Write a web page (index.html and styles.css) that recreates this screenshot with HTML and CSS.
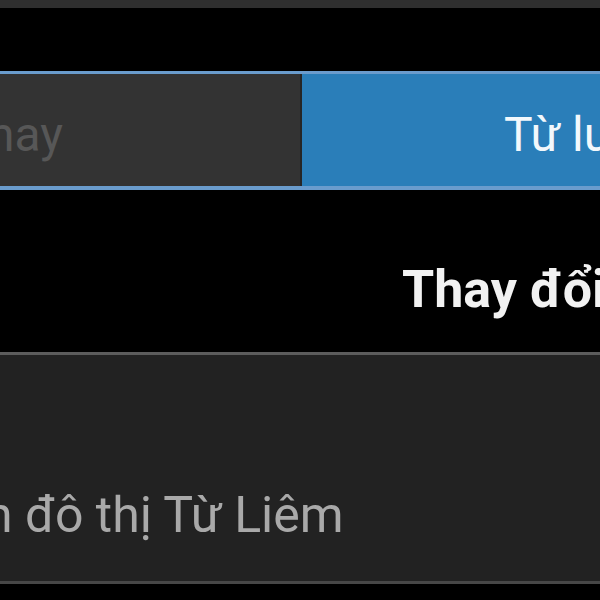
FILE: index.html
```html
<!DOCTYPE html>
<html lang="vi">
<head>
<meta charset="utf-8">
<title>Thay đổi</title>
<link rel="stylesheet" href="styles.css">
</head>
<body>
<div class="screen">
  <div class="topbar"></div>
  <div class="tabs">
    <div class="tab tab-off"><span class="tab-label-off">hay</span></div>
    <div class="tab tab-on"><span class="tab-label-on">Từ lư</span></div>
  </div>
  <h1 class="heading">Thay đổi</h1>
  <div class="panel">
    <p class="panel-text">n đô thị Từ Liêm</p>
  </div>
</div>
</body>
</html>
```

FILE: styles.css
```css
html, body {
  margin: 0;
  padding: 0;
  background: #000;
}
.screen {
  width: 600px;
  height: 600px;
  overflow: hidden;
  background: #000;
  font-family: Roboto, "Noto Sans", sans-serif;
}
.topbar {
  height: 8px;
  background: #2f2f2f;
}
.tabs {
  margin-top: 63px;
  display: flex;
  border-top: 3px solid #6a9ccd;
  border-bottom: 4px solid #6a9ccd;
  height: 112px;
}
.tab {
  height: 112px;
  font-size: 48px;
  line-height: 48px;
  white-space: nowrap;
  overflow: hidden;
  box-sizing: border-box;
  padding-top: 37px;
}
.tab-off {
  width: 302px;
  flex: none;
  background: #333333;
  border-right: 2px solid #262626;
}
.tab-label-off {
  display: inline-block;
  margin-left: -12px;
  color: #575757;
}
.tab-on {
  flex: 1;
  background: #2a7eb9;
  padding-left: 202px;
}
.tab-label-on {
  color: #f2f8fc;
}
.heading {
  margin: 74px 0 36px;
  padding-left: 402px;
  font-size: 52px;
  line-height: 52px;
  font-weight: 700;
  color: #f2f2f2;
  white-space: nowrap;
}
.panel {
  border-top: 3px solid #5c5c5c;
  border-bottom: 3px solid #474747;
  background: #222222;
  height: 226px;
  overflow: hidden;
}
.panel-text {
  margin: 135px 0 0 -15px;
  font-size: 50px;
  line-height: 50px;
  color: #a9a9a9;
  white-space: nowrap;
}
```
